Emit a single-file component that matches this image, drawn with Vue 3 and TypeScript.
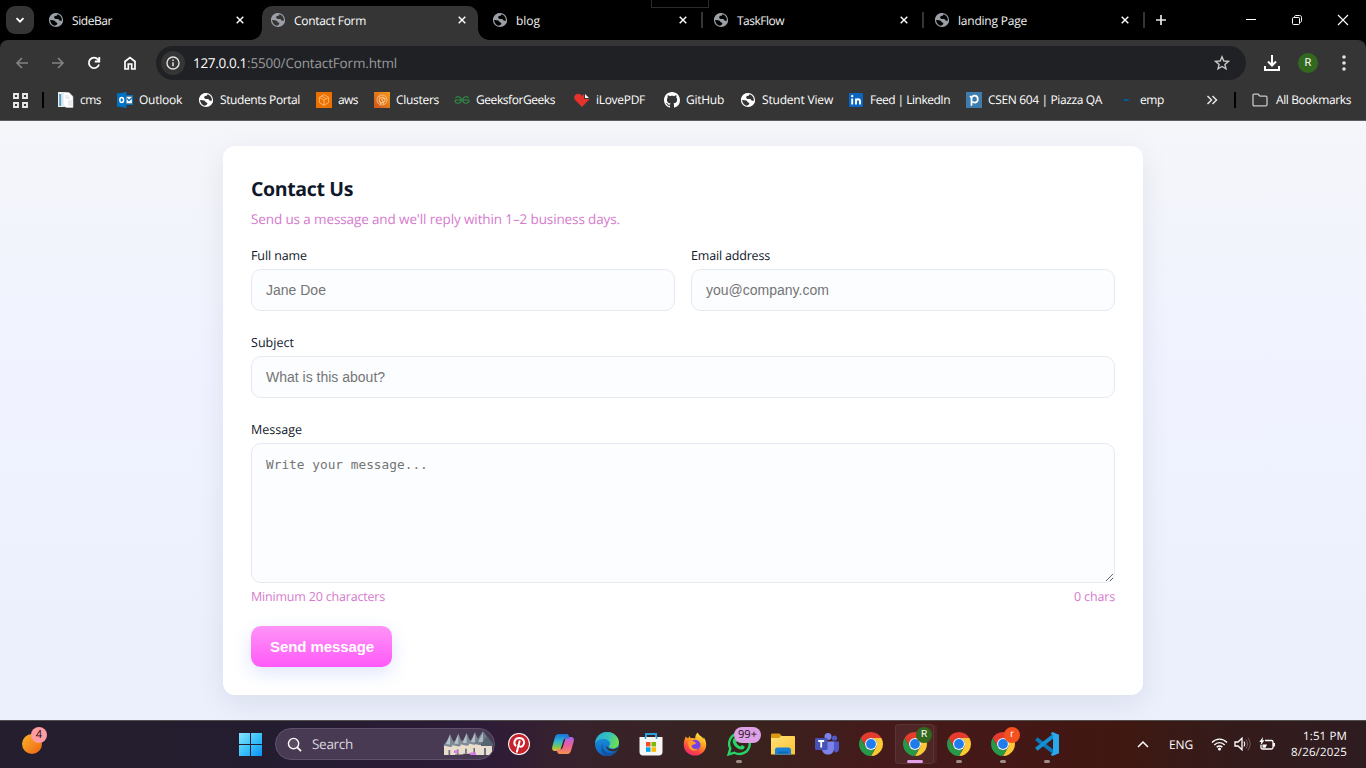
<script setup lang="ts">
import { ref } from 'vue'

interface Tab { title: string; fit: number; active?: boolean; divider?: boolean }
interface Bookmark { icon: string; title: string; fit: number; width: number; gap: number }
interface TaskItem { icon: string; running?: boolean; active?: boolean; badge?: string; tone?: string }

const tabs: Tab[] = [
  { title: 'SideBar', fit: 40 },
  { title: 'Contact Form', fit: 72, active: true },
  { title: 'blog', fit: 24, divider: true },
  { title: 'TaskFlow', fit: 47, divider: true },
  { title: 'landing Page', fit: 69, divider: true },
]

const bookmarks: Bookmark[] = [
  { icon: 'cms', title: 'cms', fit: 21, width: 59, gap: 6 },
  { icon: 'outlook', title: 'Outlook', fit: 43, width: 81, gap: 6 },
  { icon: 'globe', title: 'Students Portal', fit: 80, width: 118, gap: 6 },
  { icon: 'aws', title: 'aws', fit: 20, width: 58, gap: 6 },
  { icon: 'clusters', title: 'Clusters', fit: 43, width: 80, gap: 6 },
  { icon: 'gfg', title: 'GeeksforGeeks', fit: 79, width: 120, gap: 6 },
  { icon: 'lovepdf', title: 'iLovePDF', fit: 49, width: 90, gap: 6 },
  { icon: 'github', title: 'GitHub', fit: 38, width: 76, gap: 6 },
  { icon: 'globe', title: 'Student View', fit: 71, width: 108, gap: 6 },
  { icon: 'linkedin', title: 'Feed | LinkedIn', fit: 80, width: 118, gap: 6 },
  { icon: 'piazza', title: 'CSEN 604 | Piazza QA', fit: 114, width: 152, gap: 6 },
  { icon: 'emp', title: 'emp', fit: 24, width: 60, gap: 6 },
]

const taskItems: TaskItem[] = [
  { icon: 'pinterest' },
  { icon: 'copilot' },
  { icon: 'edge' },
  { icon: 'store' },
  { icon: 'firefox' },
  { icon: 'whatsapp', running: true, badge: '99+', tone: 'pill' },
  { icon: 'explorer' },
  { icon: 'teams' },
  { icon: 'chrome' },
  { icon: 'chrome', active: true, badge: 'R', tone: 'green' },
  { icon: 'chrome', running: true },
  { icon: 'chrome', running: true, badge: 'r', tone: 'orange' },
  { icon: 'vscode', running: true },
]

const message = ref('')

// Spreads a label's letters so that it takes the given width in pixels.
const vFit = {
  mounted(el: HTMLElement, binding: { value: number }) {
    const natural = el.getBoundingClientRect().width
    const count = (el.textContent ?? '').length
    if (count > 0) el.style.letterSpacing = `${(binding.value - natural) / count}px`
  },
}
</script>

<template>
  <div class="screen">
    <svg class="symbols" width="0" height="0" aria-hidden="true">
      <defs>
        <linearGradient id="g-sun" x1="0" y1="0" x2="1" y2="1"><stop offset="0" stop-color="#f7b52c" /><stop offset="1" stop-color="#ef6310" /></linearGradient>
        <linearGradient id="g-win" x1="0" y1="0" x2="1" y2="1"><stop offset="0" stop-color="#8ae3fc" /><stop offset=".5" stop-color="#3cc3fa" /><stop offset="1" stop-color="#0b92f5" /></linearGradient>
        <linearGradient id="g-edge" x1="0" y1="0" x2="1" y2=".3"><stop offset="0" stop-color="#27a9dd" /><stop offset=".6" stop-color="#35c3bb" /><stop offset="1" stop-color="#6bdc55" /></linearGradient>
        <linearGradient id="g-edge2" x1="0" y1="0" x2="0" y2="1"><stop offset="0" stop-color="#1f9be0" /><stop offset="1" stop-color="#0b64c0" /></linearGradient>
        <linearGradient id="g-cop1" x1="0" y1="0" x2="0" y2="1"><stop offset="0" stop-color="#1675d8" /><stop offset=".45" stop-color="#2fb8d0" /><stop offset=".75" stop-color="#7cc653" /><stop offset="1" stop-color="#f3c02d" /></linearGradient>
        <linearGradient id="g-cop2" x1="0" y1="0" x2="0" y2="1"><stop offset="0" stop-color="#a666e8" /><stop offset=".5" stop-color="#ec5d9c" /><stop offset="1" stop-color="#f7914d" /></linearGradient>
        <linearGradient id="g-fox" x1=".8" y1="0" x2=".3" y2="1"><stop offset="0" stop-color="#fff04a" /><stop offset=".4" stop-color="#ffa51f" /><stop offset=".75" stop-color="#ff4a3d" /><stop offset="1" stop-color="#ef2675" /></linearGradient>
        <linearGradient id="g-folder" x1="0" y1="0" x2="1" y2="1"><stop offset="0" stop-color="#ffe078" /><stop offset="1" stop-color="#fbc332" /></linearGradient>
        <linearGradient id="g-aws" x1="1" y1="0" x2="0" y2="1"><stop offset="0" stop-color="#f79b19" /><stop offset="1" stop-color="#cf531b" /></linearGradient>
      </defs>

      <symbol id="globe" viewBox="0 0 16 16">
        <circle cx="8" cy="8" r="6.500" fill="none" stroke="currentColor" stroke-width="1.200" />
        <path fill="currentColor" d="M8 1.200C4 1.200 1.200 4.200 1.200 8c1.900-.2 3.700-.1 5 .5 1.300.6.8 1.700 2 1.900 1.500.2 1.500 1.400.2 2.500-.6.5-1.300.7-2.100.7 4.200 1.800 8.500-1.300 8.500-5.600-1 .9-2.300 1.100-3.200.5-.8-.6-.6-1.200-1.600-1.400-1.300-.2-2.800.1-3.600-.9-.8-1.200.4-2.300 1.500-2.400C9 3.700 9.500 3 9.500 1.400z" />
      </symbol>
      <symbol id="cms" viewBox="0 0 16 16"><path fill="#eceff2" d="M0 0h8l3 3v12H0z" /><path fill="#4d9cc4" d="M1.200 2h2v12h-2z" /><path fill="#fff" stroke="#c5cbd3" stroke-width=".6" d="M5 .5h6l4 4v11H8l-3-3z" /><path d="M7 4h4M7 6h5M10 9h4M10 11h4M10 13h4" stroke="#c2cad3" stroke-width=".7" /></symbol>
      <symbol id="outlook" viewBox="0 0 16 16"><path fill="#0072c6" d="M0 1.400 9.500 0v16L0 14.500z" /><path fill="#fff" d="M9.500 4.500H15v7H9.500z" /><path fill="none" stroke="#0072c6" stroke-width="1.200" d="M9.500 3.600h6v8.800h-6" /><ellipse cx="4.700" cy="8" rx="1.900" ry="2.500" fill="none" stroke="#fff" stroke-width="1.500" /><path d="m10 6.500 2 2 3.500-3" fill="none" stroke="#0072c6" stroke-width="1.300" /></symbol>
      <symbol id="aws" viewBox="0 0 16 16"><path fill="#ed7100" d="M0 0h16v16H0z" /><path d="m8 2.700 4.600 2.600v5.300L8 13.300l-4.600-2.700V5.300zM3.400 5.300 8 8l4.600-2.700M8 8v5.300M5.700 4l4.600 2.700" fill="none" stroke="#ffc58c" stroke-width=".8" /></symbol>
      <symbol id="clusters" viewBox="0 0 16 16"><path fill="url(#g-aws)" d="M0 0h16v16H0z" /><g fill="none" stroke="#ffd09a" stroke-width=".75"><circle cx="8" cy="8" r="5" /><circle cx="8" cy="8" r="2.800" /><path d="m8 5.200 4 2M5.200 8l1.500 4M10.500 9.500 6 12M8 8l2-2M8 8l-3-4M8 8l2 4.500" /></g></symbol>
      <symbol id="gfg" viewBox="0 0 16 16"><path d="M1 8h14M1.500 6q1-1.500 3-1.300C6.500 5 7.200 6.400 7.200 8S6 11.200 4 11.200 1 9.800 1 8M14.500 6q-1-1.500-3-1.300C9.500 5 8.800 6.400 8.800 8s1.200 3.200 3.200 3.200 3-1.400 3-3.200" fill="none" stroke="#2f8d46" stroke-width="1.150" /></symbol>
      <symbol id="lovepdf" viewBox="0 0 16 16"><path fill="#e5322d" d="M8 15 1.300 8.300C-.8 5.700.4 2 3.700 1.700 5.700 1.600 7 2.500 8 4c.5-.9 1.200-1.600 2-2v5h5.500c-.2.500-.5.900-.9 1.300z" /><path fill="#fff" d="M11 2v4h4z" /></symbol>
      <symbol id="github" viewBox="0 0 16 16"><path fill="#fff" d="M8 0C3.580 0 0 3.580 0 8c0 3.540 2.290 6.530 5.470 7.590.4.070.55-.17.55-.38 0-.19-.01-.82-.01-1.490-2.010.37-2.530-.49-2.690-.94-.09-.23-.48-.94-.82-1.130-.28-.15-.68-.52-.01-.53.63-.01 1.080.58 1.230.82.72 1.210 1.870.87 2.330.66.070-.52.28-.87.51-1.070-1.780-.2-3.640-.89-3.640-3.950 0-.87.31-1.590.82-2.150-.08-.2-.36-1.020.08-2.120 0 0 .67-.21 2.200.82.64-.18 1.320-.27 2-.27s1.360.09 2 .27c1.530-1.040 2.200-.82 2.200-.82.44 1.100.16 1.920.08 2.120.51.56.82 1.270.82 2.150 0 3.070-1.870 3.750-3.650 3.950.29.25.54.73.54 1.480 0 1.070-.01 1.930-.01 2.200 0 .21.15.46.55.38A8.010 8.010 0 0 0 16 8c0-4.420-3.580-8-8-8z" /></symbol>
      <symbol id="linkedin" viewBox="0 0 16 16"><rect x="0" y="1" width="14" height="14" rx="1" transform="translate(1 0)" fill="#0a66c2" /><path d="M4.200 6.500v6M8 12.500v-6M8 9.500c0-3 4-3 4 0v3" fill="none" stroke="#fff" stroke-width="1.900" /><circle cx="4.200" cy="4.100" r="1.200" fill="#fff" /></symbol>
      <symbol id="piazza" viewBox="0 0 16 16"><path fill="#3f7cae" d="M0 0h16v16H0z" /><path d="M5.500 13.800V7c0-4.600 6.300-4.300 6.300.2 0 3.700-3.700 4-5.500 2.500M5.500 6 4 4" fill="none" stroke="#fff" stroke-width="1.700" /></symbol>
      <symbol id="emp" viewBox="0 0 16 16"><path fill="#12406f" d="M4.500 7h7v2h-7z" /><path fill="#0c70a9" d="M6 7.500h4.500v1H6z" /></symbol>

      <symbol id="pinterest" viewBox="0 0 24 24"><circle cx="12" cy="12" r="11" fill="#fff" /><circle cx="12" cy="12" r="10" fill="#c8232c" /><path d="M8.500 13.700c-2.400-2.800-.8-7.700 3.800-7.700 4.700 0 5.800 4.300 3.900 7.200-1.300 2-4.200 2-4.900-.2M12.600 9.300 9.900 19.800" fill="none" stroke="#fff" stroke-width="2" stroke-linecap="round" /></symbol>
      <symbol id="copilot" viewBox="0 0 24 24"><path fill="url(#g-cop1)" d="M7.500 2h7.700c1.600 0 2.300 1 2.700 2.400l.6 2h-3.200c-1.800 0-2.700.8-3.200 2.500l-1.900 6.600c-.7 2.300-1.600 3.500-3.700 3.500H4c-2.600 0-3.400-2-2.700-4.600l2.600-9C4.600 3.300 5.600 2 7.500 2z" /><path fill="url(#g-cop2)" d="M16.500 22H8.800c-1.600 0-2.300-1-2.700-2.400l-.6-2h3.200c1.800 0 2.700-.8 3.200-2.500l1.900-6.600C14.500 6.200 15.400 5 17.500 5H20c2.600 0 3.400 2 2.700 4.600l-2.600 9c-.7 2.100-1.700 3.400-3.600 3.400z" /><path fill="#2b75db" d="M14 2h1.300c1.600 0 2.200 1 2.600 2.400l.6 2h-3.200c-.8 0-1.400.2-1.900.6z" /></symbol>
      <symbol id="edge" viewBox="0 0 24 24"><circle cx="12" cy="12" r="12" fill="url(#g-edge2)" /><path fill="url(#g-edge)" d="M.2 11C1 4.500 6 0 12 0c6.800 0 12 5 12 10.500 0 3.700-2.800 6-6.200 6-2.700 0-4-1-4-1.900 0-.7 1.200-1.200 1.200-3 0-2.600-2.500-4.700-6.200-4.700C4.800 6.900 1.500 8.500.2 11z" /><path fill="#1451a0" d="M9.200 9.500C5.500 13.500 8 20.500 14.500 21c3 .3 5.700-.7 7.700-3C20 22 16.500 24 12.500 24 6 23.500 4.500 14 9.200 9.500z" /><path fill="#392827" d="M22.500 15.400c.8.300.7 1.500-.3 2.600-2.200 1.800-7 2-9.700-.7-1-1-1.500-2.400-.8-3.300 1.200 3.500 7 4.500 10.800 1.400z" /></symbol>
      <symbol id="store" viewBox="0 0 24 24"><path d="M7 6V2h10v4" fill="none" stroke="#279fe2" stroke-width="2" /><path fill="#f6f6f6" d="M.5 5h23v15c0 2.200-1.300 3.500-3.500 3.500H4C1.800 23.500.5 22.200.5 20z" /><path d="M6.500 5v2M17.500 5v2" stroke="#279fe2" stroke-width="1.500" /><path fill="#f25022" d="M7 10h4.500v4.500H7z" /><path fill="#7fba00" d="M12.500 10H17v4.500h-4.500z" /><path fill="#00a4ef" d="M7 15.300h4.500v4.500H7z" /><path fill="#ffb900" d="M12.500 15.300H17v4.500h-4.500z" /></symbol>
      <symbol id="firefox" viewBox="0 0 24 24"><path fill="url(#g-fox)" d="M2.800 4.500c.7 1 1.500 1.600 2.400 1.800L6.500 4l1.200 2.300c1.600-.5 3.200-.4 4.500.2C12.100 4 13 1.500 15 .500c.2 2.500 4 3.800 5.200 6.200l.7-1.200c1.500 2.300 2.400 4.700 2.300 7.400C23 19 18.200 23.500 12 23.500S.800 18.800.8 12.900c0-3 .7-5.700 2-8.400z" /><circle cx="12.200" cy="13" r="5.300" fill="#7542e5" /><path fill="#ff9a2a" d="M5 10.500c2-1.500 4.500-2 7-.6 2 1.100 0 2.400-1.700 2.600-1.500.2-2.300 2-1.100 3.200 1.600 1.400 3.800 1.700 5.800.6-2.500 4-8.500 2.500-9.300-1.800z" /></symbol>
      <symbol id="whatsapp" viewBox="0 0 24 24"><path d="m1.600 22.400 1.700-6A10.300 10.300 0 1 1 7.500 20.700z" fill="none" stroke="#25d366" stroke-width="2.400" /><path fill="#25d366" d="M8 6c.8 0 1.200.3 1.400.8l.9 2.200-1.200 1.600c1 1.900 2.400 3.200 4.500 4l1.400-1.500 2.700 1.400c.2 2.200-1.700 3.200-3.500 3.100C9.500 17 5.800 12.600 5.700 9.300 5.600 7.600 6.700 6 8 6z" /></symbol>
      <symbol id="explorer" viewBox="0 0 24 24"><path fill="#d99a12" d="M0 3c0-1 .6-1.500 1.500-1.500h7L11 4h11.500c1 0 1.500.6 1.500 1.500V10H0z" /><path fill="url(#g-folder)" d="M0 6h8l2-2h12.500c1 0 1.500.5 1.500 1.500V22.500H0z" /><path fill="#1782d5" d="M4 22.500V18c0-1.700 1-2.500 2.500-2.500h11c1.600 0 2.500.9 2.500 2.500v4.500z" /><path fill="#1264ae" d="M7 19.500h10v1.800H7z" /></symbol>
      <symbol id="teams" viewBox="0 0 24 24"><circle cx="19.500" cy="6" r="2.600" fill="#5059c9" /><path fill="#5059c9" d="M16 9.500h8v7c0 3-2 4-4 4z" /><circle cx="13" cy="4.500" r="3.500" fill="#7b83eb" /><path fill="#7b83eb" d="M7 9.500h12v7c0 4-2.700 6-6 6s-6-2-6-6z" /><rect y="6" width="12.500" height="12" rx="1.200" fill="#4653b5" /><path stroke="#fff" stroke-width="1.800" fill="none" d="M3.200 9h6M6.200 9v6.500" /></symbol>
      <symbol id="chrome" viewBox="0 0 24 24"><path fill="#e33b2e" d="M1.610 6A12 12 0 0 1 22.390 6H12A6 6 0 0 0 6.800 15z" /><path fill="#fcc934" transform="rotate(120 12 12)" d="M1.610 6A12 12 0 0 1 22.390 6H12A6 6 0 0 0 6.800 15z" /><path fill="#279847" transform="rotate(240 12 12)" d="M1.610 6A12 12 0 0 1 22.390 6H12A6 6 0 0 0 6.800 15z" /><circle cx="12" cy="12" r="6" fill="#fff" /><circle cx="12" cy="12" r="4.900" fill="#1f7cec" /></symbol>
      <symbol id="vscode" viewBox="0 0 24 24"><path fill="none" stroke="#0879bd" stroke-width="3.800" d="m1.300 6.800 17 13.200" /><path fill="none" stroke="#1491d4" stroke-width="3.800" d="m1.300 17.200 17-13.200" /><path fill="#27a9ee" d="m17.500 0 6.500 2.800v18.400L17.500 24l-1.800-1.500 2.300-2V3.600l-2.300-2z" /></symbol>
      <symbol id="cottages" viewBox="0 0 50 28"><g v-for="n in 4" :key="n" :transform="`translate(${(n - 1) * 8.3} ${(4 - n) * 0.7})`"><path fill="#e9decb" d="M1 13h11v10H1z" /><path fill="#7d8a96" d="m.5 13.500 4-5.500 2.500-6 2.500 6 4 5.500-6 1.500z" /><path fill="#b5c1ca" d="m3 12 4-9v9.500z" /><path fill="#6d6a7c" d="M5.500 18h1.700v5H5.500z" /></g><path fill="#eadfce" d="M32 13h17v12H32z" /><path fill="#6e7c88" d="m31 14 9-13 9 12.500-9 2z" /><path fill="#aab6c0" d="m35 12 5-10v10z" /><path fill="#566472" d="m38 14 6-8 6 8v2H38z" /><path fill="#69748a" d="M41 18h2v7h-2z" /><path fill="#d578e3" d="M11 20.500h4V23h-4zM27 22.500h6v2.500h-6z" /></symbol>
    </svg>

    <header class="browser">
      <div class="tabstrip">
        <button class="tab-menu"><svg width="10" height="10" viewBox="0 0 10 10"><path d="m1.500 3.200 3.500 3.500 3.500-3.500" fill="none" stroke="#fff" stroke-width="1.800" /></svg></button>
        <div class="tabs">
          <div v-for="tab in tabs" :key="tab.title" class="tab" :class="{ active: tab.active, divided: tab.divider }">
            <svg class="favicon"><use href="#globe" /></svg>
            <span class="tab-title"><span v-fit="tab.fit">{{ tab.title }}</span></span>
            <svg class="close" viewBox="0 0 8 8"><path d="m.7.7 6.600 6.600m0-6.600L.7 7.300" stroke="#fff" stroke-width="1.400" /></svg>
          </div>
        </div>
        <svg class="new-tab" viewBox="0 0 12 12"><path d="M6 1v10M1 6h10" stroke="#e8e8e8" stroke-width="1.700" /></svg>
        <div class="window-buttons">
          <svg viewBox="0 0 12 12"><path d="M1 5.500h10" stroke="#fff" /></svg>
          <svg viewBox="0 0 12 12" fill="none" stroke="#fff"><rect x="1.500" y="3.500" width="7" height="7" rx="1" /><path d="M3.500 3.500V3c0-1 .5-1.500 1.500-1.500h3.500c1.500 0 2 .7 2 2v3.300c0 1-.5 1.700-2 1.700" /></svg>
          <svg viewBox="0 0 12 12"><path d="m1 1 10 10M11 1 1 11" stroke="#fff" stroke-width="1.100" /></svg>
        </div>
        <div class="drag-handle"></div>
      </div>

      <div class="toolbar">
        <div class="nav">
          <svg viewBox="0 0 16 16" class="dim"><path d="M14 8H3m5-5L3 8l5 5" /></svg>
          <svg viewBox="0 0 16 16" class="dim"><path d="M2 8h11M8 3l5 5-5 5" /></svg>
          <svg viewBox="0 0 16 16"><path d="M13 9.500A5.200 5.200 0 1 1 12 4.500l1 1.500M13.300 2v4.500H8.800" stroke-width="1.800" /></svg>
          <svg viewBox="0 0 16 16"><path d="M3 14V6.500L8 2.500l5 4V14h-3.300V9H6.300v5z" stroke-width="1.700" /></svg>
        </div>
        <div class="address">
          <span class="site-info"><svg viewBox="0 0 14 14"><circle cx="7" cy="7" r="6" fill="none" stroke="#e3e3e3" stroke-width="1.400" /><path d="M7 6.300v4M7 3.500V5" stroke="#e3e3e3" stroke-width="1.500" /></svg></span>
          <span class="url"><span v-fit="54" class="host">127.0.0.1</span><span v-fit="150">:5500/ContactForm.html</span></span>
          <svg class="star" viewBox="0 0 16 16"><path d="m8 1.800 1.800 4.200 4.600.4-3.500 3 1.100 4.500L8 11.500l-4 2.400 1.100-4.500-3.500-3 4.600-.4z" fill="none" stroke="#c7c7c7" stroke-width="1.400" /></svg>
        </div>
        <div class="toolbar-end">
          <svg class="download" viewBox="0 0 18 18"><path d="M9 1v10M5 7.500 9 11.500l4-4M2 12v4h14v-4" fill="none" stroke="#fff" stroke-width="2" /></svg>
          <span class="avatar">R</span>
          <svg class="dots" viewBox="0 0 4 16"><circle v-for="y in [2, 8, 14]" :key="y" cx="2" :cy="y" r="1.800" fill="#e3e3e3" /></svg>
        </div>
      </div>

      <nav class="bookmarks">
        <svg class="apps" viewBox="0 0 15 15"><path d="M1 1h4v4H1zM10 1h4v4h-4zM1 10h4v4H1zM10 10h4v4h-4z" fill="none" stroke="#e8e8e8" stroke-width="1.900" /></svg>
        <i class="bar first-bar"></i>
        <div v-for="mark in bookmarks" :key="mark.title" class="bookmark" :style="{ width: mark.width + 'px', gap: mark.gap + 'px' }">
          <svg class="mark-icon"><use :href="'#' + mark.icon" /></svg>
          <span v-fit="mark.fit" class="mark-title">{{ mark.title }}</span>
        </div>
        <svg class="more" viewBox="0 0 12 10"><path d="m1.500 1 4 4-4 4m5-8 4 4-4 4" fill="none" stroke="#e8e8e8" stroke-width="1.500" /></svg>
        <i class="bar"></i>
        <svg class="folder" viewBox="0 0 16 14"><path d="M1 11.500v-9C1 1.700 1.400 1.200 2.200 1.200h4L8 3.200h5.800c.8 0 1.200.4 1.200 1.200v7.100c0 .8-.4 1.300-1.200 1.300H2.200c-.8 0-1.200-.5-1.200-1.300z" fill="none" stroke="#c7c7c7" stroke-width="1.300" /></svg>
        <span v-fit="75" class="mark-title">All Bookmarks</span>
      </nav>
    </header>

    <main class="page">
      <form class="card" @submit.prevent>
        <h1><span v-fit="102">Contact Us</span></h1>
        <p class="subtitle"><span v-fit="369">Send us a message and we'll reply within 1–2 business days.</span></p>
        <div class="row">
          <label class="field"><span class="label"><span v-fit="56">Full name</span></span><input type="text" placeholder="Jane Doe" /></label>
          <label class="field"><span class="label"><span v-fit="79">Email address</span></span><input type="email" placeholder="you@company.com" /></label>
        </div>
        <label class="field wide"><span class="label"><span v-fit="43">Subject</span></span><input type="text" placeholder="What is this about?" /></label>
        <label class="field wide"><span class="label"><span v-fit="51">Message</span></span><textarea v-model="message" placeholder="Write your message..."></textarea></label>
        <div class="hint"><span v-fit="134">Minimum 20 characters</span><span v-fit="41">{{ message.length }} chars</span></div>
        <button class="send"><span v-fit="104">Send message</span></button>
      </form>
    </main>

    <footer class="taskbar">
      <div class="weather"><svg viewBox="0 0 20 20"><circle cx="10" cy="10" r="10" fill="url(#g-sun)" /></svg><b>4</b></div>
      <svg class="start" viewBox="0 0 23 23"><path fill="url(#g-win)" d="M0 0h11v11H0zM12 0h11v11H12zM0 12h11v11H0zM12 12h11v11H12z" /></svg>
      <div class="search">
        <svg class="lens" viewBox="0 0 16 16"><circle cx="7" cy="7" r="5.500" fill="#ffffff18" stroke="#fff" stroke-width="1.500" /><path d="m11 11 4 4" stroke="#fff" stroke-width="1.800" /></svg>
        <span v-fit="41">Search</span>
        <svg class="cottages"><use href="#cottages" /></svg>
      </div>
      <div class="apps-row">
        <div v-for="(item, i) in taskItems" :key="i" class="task" :class="{ active: item.active, running: item.running }">
          <svg class="task-icon"><use :href="'#' + item.icon" /></svg>
          <span v-if="item.badge" class="badge" :class="item.tone">{{ item.badge }}</span>
        </div>
      </div>
      <div class="tray">
        <svg class="chevron" viewBox="0 0 12 8"><path d="m1 7 5-5 5 5" fill="none" stroke="#fff" stroke-width="1.500" /></svg>
        <span class="lang"><span v-fit="24">ENG</span></span>
        <svg class="wifi" viewBox="0 0 17 14"><g fill="none" stroke="#fff" stroke-width="1.400"><path d="M1 5.500c4.300-4.500 10.700-4.500 15 0M3.300 8c3-3.200 7.400-3.200 10.400 0M5.700 10.300c1.700-1.700 3.900-1.700 5.600 0" /></g><circle cx="8.500" cy="12" r="1.500" fill="#fff" /></svg>
        <svg class="volume" viewBox="0 0 17 14"><path d="M1 5h3l4-3.800v11.600L4 9H1z" fill="none" stroke="#fff" stroke-width="1.300" /><path d="M10 4.500c1 1.500 1 3.500 0 5" fill="none" stroke="#fff" stroke-width="1.100" /><path d="M12 2.500c2 2.700 2 6.300 0 9M14 .8c2.800 4 2.800 8.400 0 12.400" fill="none" stroke="#755a5b" /></svg>
        <svg class="battery" viewBox="0 0 17 14"><path d="M6 3.500h6.500c.8 0 1.500.6 1.500 1.500v5.500c0 .9-.7 1.500-1.500 1.500h-9c-.9 0-1.500-.6-1.500-1.500V8M15.300 6v3.500" fill="none" stroke="#fff" stroke-width="1.300" /><path fill="#fff" d="M3.500 7.500H8L6.500 10.700h-3zM4 0 .3 5h2L1.500 8.500l4-5.200h-2z" /></svg>
        <div class="clock"><span v-fit="44">1:51 PM</span><span v-fit="56">8/26/2025</span></div>
      </div>
    </footer>
  </div>
</template>

<style>
body { margin: 0; overflow: hidden; }
</style>

<style scoped>
* { box-sizing: border-box; }
.screen { width: 1366px; height: 768px; display: flex; flex-direction: column; overflow: hidden; font-family: "Open Sans", "Noto Sans", sans-serif; font-size: 12px; color: #fff; text-rendering: geometricPrecision; }
.symbols { position: absolute; }
svg { display: block; flex: none; }
button { border: 0; padding: 0; }

.browser { height: 121px; flex: none; background: #000; }
.tabstrip { height: 40px; display: flex; position: relative; }
.tab-menu { width: 28px; height: 28px; margin: 6px 7px 0 6px; border-radius: 9px; background: #353535; display: flex; align-items: center; justify-content: center; }
.tabs { display: flex; width: 1107px; }
.tab { width: 221px; flex: none; position: relative; display: flex; align-items: center; padding-left: 7px; color: #f2f2f2; }
.tab:first-child { width: 222px; }
.favicon { width: 16px; height: 16px; color: #9aa0a6; }
.tab-title { width: 160px; margin-left: 8px; padding-top: 1px; white-space: nowrap; }
.close { width: 8px; height: 8px; margin-left: 4px; }
.tab.active { color: #fff; }
.tab.active::before { content: ""; position: absolute; z-index: 0; left: -1px; width: 216px; top: 6px; bottom: 0; border-radius: 10px 10px 0 0; background: #353535; }
.tab.active::after { content: ""; position: absolute; left: -12px; width: 238px; height: 11px; bottom: 0; background: radial-gradient(circle at 0 0, transparent 10.500px, #353535 11px) left / 11px 11px no-repeat, radial-gradient(circle at 100% 0, transparent 10.500px, #353535 11px) right / 11px 11px no-repeat; }
.tab.active > * { position: relative; z-index: 1; }
.tab.divided { padding-left: 8px; }
.tab.divided .tab-title { width: 159px; }
.tab.divided::after { content: ""; position: absolute; right: 2px; top: 12px; width: 2px; height: 16px; background: #353535; }
.new-tab { width: 12px; height: 12px; margin: 14px 0 0 7px; }
.window-buttons { display: flex; gap: 34px; margin: 14px 0 0 78px; }
.window-buttons svg { width: 12px; height: 12px; }
.drag-handle { position: absolute; left: 651px; top: -1px; width: 58px; height: 9px; border: 1px solid #2b2b2b; }

.toolbar { height: 40px; background: #353535; border-radius: 8px 8px 0 0; display: flex; padding: 6px 0 0; }
.nav { display: flex; gap: 20px; padding: 9px 0 0 14px; width: 156px; }
.nav svg { width: 16px; height: 16px; fill: none; stroke: #fff; stroke-width: 1.6; }
.nav .dim { stroke: #838383; }
.address { width: 1090px; height: 34px; border-radius: 17px; background: #202124; display: flex; align-items: center; padding: 0 16px 0 5px; }
.site-info { width: 24px; height: 24px; border-radius: 50%; background: #353535; display: flex; align-items: center; justify-content: center; }
.site-info svg { width: 14px; height: 14px; }
.url { margin-left: 8px; flex: 1; font-size: 13.500px; color: #9a9b9e; display: flex; }
.host { color: #fff; }
.star { width: 16px; height: 16px; }
.toolbar-end { display: flex; align-items: center; height: 34px; padding-left: 17px; }
.download { width: 18px; height: 18px; }
.avatar { width: 20px; height: 20px; margin: 0 15px 0 17px; border-radius: 50%; background: #32691e; font: 11px/20px Roboto, sans-serif; text-align: center; }
.dots { width: 4px; height: 16px; margin-left: 9px; }

.bookmarks { height: 41px; background: #353535; border-bottom: 1px solid #5d5d5d; display: flex; align-items: center; white-space: nowrap; padding-left: 13px; }
.apps { width: 15px; height: 15px; }
.bar { width: 2px; height: 16px; background: #000; }
.first-bar { margin: 0 14px; }
.bookmark { display: flex; align-items: center; flex: none; }
.mark-title { padding-bottom: 2px; }
.mark-icon { width: 16px; height: 16px; }
.more { width: 12px; height: 10px; margin: 0 16px 0 28px; }
.folder { width: 16px; height: 14px; margin: 0 8px 0 16px; }

.page { height: 599px; padding-top: 25px; background: linear-gradient(#f5f6fa 0, #f0f3ff 40%, #ecf0fd 85%, #ecf0fd 100%); overflow: hidden; flex: none; color: #0f172a; }
.card { width: 920px; height: 549px; margin: 0 auto; padding: 28px; background: #fff; border-radius: 12px; box-shadow: 0 8px 30px rgba(15, 23, 42, .08); }
h1 { margin: 0; height: 30px; font-size: 19.500px; line-height: 30px; font-weight: 700; }
.subtitle { margin: 5px 0 0; height: 20px; line-height: 20px; font-size: 13.500px; color: #d57ace; }
.row { display: grid; grid-template-columns: 1fr 1fr; gap: 16px; margin-top: 18px; }
.field { display: block; }
.label { display: block; height: 18px; line-height: 18px; margin-bottom: 4px; font-size: 12.500px; }
.wide { margin-top: 23px; }
input, textarea { display: block; width: 100%; margin: 0; border: 1px solid #e6e9f1; border-radius: 10px; background: #fbfdff; padding: 0 14px; font: 14px "Liberation Sans", Arial, sans-serif; outline: 0; }
input { height: 42px; }
textarea { height: 140px; padding: 13px 14px; font: 12.800px/16px "DejaVu Sans Mono", monospace; resize: vertical; }
::placeholder { color: #757575; opacity: 1; }
.hint { height: 18px; line-height: 18px; margin-top: 5px; font-size: 12.500px; color: #d57ace; display: flex; justify-content: space-between; }
.send { width: 141px; height: 41px; margin-top: 20px; padding-left: 1px; border-radius: 10px; background: linear-gradient(#ff94f7, #ff59f8); box-shadow: 0 6px 18px rgba(79, 110, 247, .18); font: 700 15px "Liberation Sans", Arial, sans-serif; color: #fff; }

.taskbar { height: 48px; flex: none; border-top: 1px solid #51504f; padding-bottom: 1px; display: flex; align-items: center; background: linear-gradient(90deg, #251e2e 0, #231d2f 18%, #2d1b38 35%, #38222c 42%, #38231f 54%, #451a1b 64%, #431714 77%, #401811 82%, #351b1a 89%, #2e1c21 100%); }
.weather { width: 20px; height: 20px; margin: 0 197px 0 22px; position: relative; }
.weather svg { width: 20px; height: 20px; }
.weather b { position: absolute; left: 9px; top: -7px; width: 16px; height: 16px; border-radius: 50%; background: #ff9ba2; color: #111; font-size: 11px; font-weight: 400; line-height: 16px; text-align: center; }
.start { width: 23px; height: 23px; }
.search { width: 220px; height: 32px; margin-left: 13px; border: 1px solid #62506a; border-radius: 16px; background: #483a53; display: flex; align-items: center; overflow: hidden; font-size: 13.500px; color: #dcd7df; padding-left: 11px; }
.lens { width: 15px; height: 15px; margin-right: 10px; }
.cottages { width: 50px; height: 28px; margin-left: auto; margin-right: 1px; }
.apps-row { display: flex; margin-left: 2px; }
.task { width: 44px; height: 40px; position: relative; display: flex; align-items: center; justify-content: center; }
.task-icon { width: 24px; height: 24px; }
.task.active::before { content: ""; position: absolute; inset: 0 3px 0 2px; border: 1px solid #ffffff12; border-radius: 4px; background: #ffffff0f; box-shadow: 4px 0 0 -1px #ffffff0d; }
.task.active .task-icon { position: relative; }
.task.running::after, .task.active::after { content: ""; position: absolute; left: 19px; bottom: 1px; width: 6px; height: 3px; border-radius: 2px; background: #9f8d8b; }
.task.active::after { left: 14px; width: 16px; background: #e4a0e9; }
.badge { position: absolute; text-align: center; font: 10px/16px Roboto, sans-serif; left: 23px; top: 3px; width: 16px; height: 16px; border-radius: 50%; }
.badge.pill { left: 17px; width: 27px; border-radius: 8px; background: #dfa1e5; color: #171017; font: 11px/16px "Open Sans", sans-serif; }
.badge.green { background: #32691e; }
.badge.orange { background: #f4511e; }
.tray { margin-left: auto; margin-right: 19px; display: flex; align-items: center; }
.chevron { width: 12px; height: 8px; margin-right: 20px; }
.lang { width: 42px; padding-top: 1px; }
.wifi { width: 17px; height: 14px; }
.volume { width: 17px; height: 14px; margin-left: 6px; }
.battery { width: 17px; height: 14px; margin: 0 15px 0 8px; }
.clock { width: 56px; padding-top: 2px; display: flex; flex-direction: column; align-items: flex-end; font-size: 11.500px; line-height: 16px; white-space: nowrap; }
</style>
